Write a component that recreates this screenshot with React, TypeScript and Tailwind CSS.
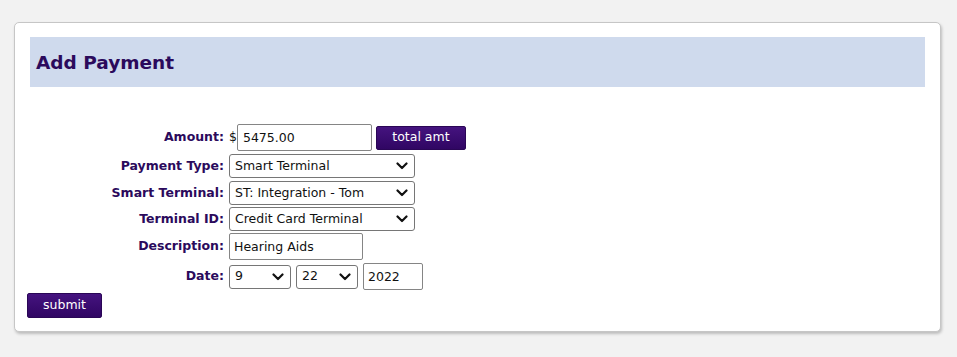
import React from "react";

const font = "font-['DejaVu_Sans',Verdana,sans-serif]";

function Chevron() {
  return (
    <svg
      className="pointer-events-none absolute right-[7px] top-1/2 -translate-y-1/2"
      width="12"
      height="8"
      viewBox="0 0 12 8"
      fill="none"
    >
      <path d="M1.5 1.5l4.5 4.5 4.5-4.5" stroke="#111" strokeWidth="2.2" strokeLinecap="round" strokeLinejoin="round" />
    </svg>
  );
}

function Select({ value, options, width }: { value: string; options: string[]; width: string }) {
  return (
    <div className={`relative flex h-[24px] ${width}`}>
      <select
        defaultValue={value}
        className={`block h-full w-full appearance-none rounded-[3px] border border-[#767676] bg-white pl-[5px] pr-[22px] text-[12.5px] text-[#111] outline-none ${font}`}
      >
        {options.map((o) => (
          <option key={o}>{o}</option>
        ))}
      </select>
      <Chevron />
    </div>
  );
}

function Input({ value, width, pad = "pl-[4px]" }: { value: string; width: string; pad?: string }) {
  return (
    <input
      type="text"
      defaultValue={value}
      className={`block h-[27px] ${width} ${pad} rounded-[2px] border border-[#858585] bg-white text-[12.5px] text-[#111] outline-none ${font}`}
    />
  );
}

function Row({ label, top, children }: { label: string; top: string; children: React.ReactNode }) {
  return (
    <div className={`flex items-center ${top}`}>
      <div className={`w-[197px] pr-[3px] text-right text-[12.5px] font-bold text-[#2b0a5c] ${font}`}>{label}</div>
      <div className="ml-[2px] flex items-center">{children}</div>
    </div>
  );
}

function PurpleButton({ label, width, height }: { label: string; width: string; height: string }) {
  return (
    <button
      type="button"
      className={`block ${width} ${height} rounded-[2px] border border-[#2a0656] bg-gradient-to-b from-[#45137f] to-[#300663] text-[12.5px] text-white ${font}`}
    >
      {label}
    </button>
  );
}

export default function App() {
  return (
    <div className="min-h-[357px] w-full bg-[#f2f2f2] pt-[22px] pl-[14px]">
      <div className="h-[310px] w-[927px] rounded-[5px] border border-[#c6c6c6] bg-white pl-[12px] pt-[14px] shadow-[1px_2px_3px_rgba(0,0,0,0.22)]">
        <div className="ml-[3px] flex h-[50px] w-[895px] items-center bg-[#cfdaed] pl-[6px] pt-[1px]">
          <h1 className={`text-[18.5px] font-bold text-[#2b0a5c] ${font}`}>Add Payment</h1>
        </div>

        <div className="mt-[37px] ml-[3px]">
          <Row label="Amount:" top="">
            <span className={`text-[12.5px] text-[#111] ${font}`}>$</span>
            <div className="flex">
              <Input value="5475.00" width="w-[135px]" pad="pl-[5px]" />
            </div>
            <div className="ml-[4px] flex">
              <PurpleButton label="total amt" width="w-[90px]" height="h-[24px]" />
            </div>
          </Row>
          <Row label="Payment Type:" top="mt-[3px]">
            <Select value="Smart Terminal" options={["Smart Terminal", "Cash", "Check"]} width="w-[186px]" />
          </Row>
          <Row label="Smart Terminal:" top="mt-[3px]">
            <Select value="ST: Integration - Tom" options={["ST: Integration - Tom"]} width="w-[186px]" />
          </Row>
          <Row label="Terminal ID:" top="mt-[2px]">
            <Select value="Credit Card Terminal" options={["Credit Card Terminal"]} width="w-[186px]" />
          </Row>
          <Row label="Description:" top="mt-[2px]">
            <Input value="Hearing Aids" width="w-[134px]" />
          </Row>
          <Row label="Date:" top="mt-[3px]">
            <Select value="9" options={["9"]} width="w-[62px]" />
            <div className="ml-[5px] flex">
              <Select value="22" options={["22"]} width="w-[62px]" />
            </div>
            <div className="ml-[5px] flex">
              <Input value="2022" width="w-[60px]" />
            </div>
          </Row>
        </div>

        <div className="mt-[3px] flex">
          <PurpleButton label="submit" width="w-[75px]" height="h-[25px]" />
        </div>
      </div>
    </div>
  );
}
